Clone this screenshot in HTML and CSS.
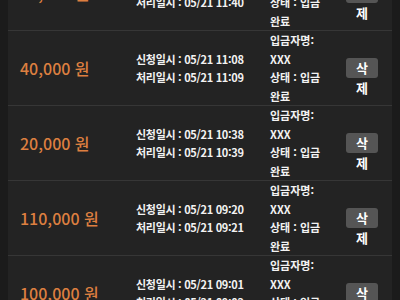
FILE: index.html
```html
<!DOCTYPE html>
<html lang="ko">
<head>
    <meta charset="UTF-8">
    <meta name="viewport" content="width=device-width, initial-scale=1.0">
    <title>입금 내역</title>
    <link rel="stylesheet" href="styles.css">
</head>
<body>
    <div class="page">
        <div class="list">
            <div class="row">
                <div class="amount">50,000 원</div>
                <div class="dates">
                    <div>신청일시 : 05/21 11:39</div>
                    <div>처리일시 : 05/21 11:40</div>
                </div>
                <div class="info">
                    <div>입금자명: XXX</div>
                    <div>상태 : 입금 완료</div>
                </div>
                <div class="action"><button class="del-btn">삭제</button></div>
            </div>
            <div class="row">
                <div class="amount">40,000 원</div>
                <div class="dates">
                    <div>신청일시 : 05/21 11:08</div>
                    <div>처리일시 : 05/21 11:09</div>
                </div>
                <div class="info">
                    <div>입금자명: XXX</div>
                    <div>상태 : 입금 완료</div>
                </div>
                <div class="action"><button class="del-btn">삭제</button></div>
            </div>
            <div class="row">
                <div class="amount">20,000 원</div>
                <div class="dates">
                    <div>신청일시 : 05/21 10:38</div>
                    <div>처리일시 : 05/21 10:39</div>
                </div>
                <div class="info">
                    <div>입금자명: XXX</div>
                    <div>상태 : 입금 완료</div>
                </div>
                <div class="action"><button class="del-btn">삭제</button></div>
            </div>
            <div class="row">
                <div class="amount">110,000 원</div>
                <div class="dates">
                    <div>신청일시 : 05/21 09:20</div>
                    <div>처리일시 : 05/21 09:21</div>
                </div>
                <div class="info">
                    <div>입금자명: XXX</div>
                    <div>상태 : 입금 완료</div>
                </div>
                <div class="action"><button class="del-btn">삭제</button></div>
            </div>
            <div class="row">
                <div class="amount">100,000 원</div>
                <div class="dates">
                    <div>신청일시 : 05/21 09:01</div>
                    <div>처리일시 : 05/21 09:02</div>
                </div>
                <div class="info">
                    <div>입금자명: XXX</div>
                    <div>상태 : 입금 완료</div>
                </div>
                <div class="action"><button class="del-btn">삭제</button></div>
            </div>
        </div>
    </div>
</body>
</html>
```

FILE: styles.css
```css
* {
    box-sizing: border-box;
}
body {
    margin: 0;
    background: #1b1b1b;
    font-family: "Noto Sans CJK KR", "Noto Sans", sans-serif;
    color: #f2f2f2;
    overflow: hidden;
}
.page {
    padding: 0 8px;
    min-height: 100vh;
}
.list {
    background: #232323;
    margin-top: -44px;
}
.row {
    display: grid;
    grid-template-columns: 116px 134px 62px 1fr;
    align-items: center;
    padding-left: 12px;
    border-bottom: 1px solid #363636;
    font-size: 11px;
    font-weight: 700;
    line-height: 18.5px;
}
.amount {
    color: #dd7f40;
    font-size: 16px;
    font-weight: 500;
}
.dates {
    letter-spacing: -0.3px;
}
.info {
    word-break: keep-all;
}
.action {
    display: flex;
    justify-content: center;
}
.del-btn {
    width: 32px;
    height: 20px;
    padding: 0 7px;
    border: none;
    border-radius: 3px;
    background: #555;
    color: #fff;
    font-family: inherit;
    font-size: 13px;
    font-weight: 700;
    line-height: 20px;
    display: block;
    overflow: visible;
    white-space: normal;
    word-break: break-all;
}
```
